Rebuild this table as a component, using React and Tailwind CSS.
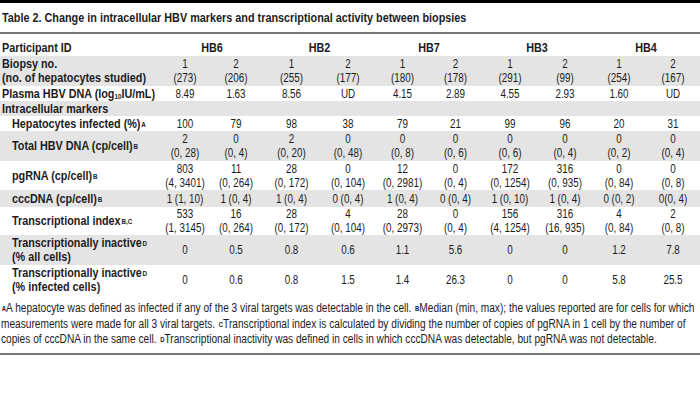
import React from "react";

const cols = "grid grid-cols-[161px_48px_54px_57px_56px_53px_53px_56px_54px_54px_54px]";

const Sup = ({ children }) => (
  <sup className="text-[7px] font-bold relative -top-[1px] ml-[1px]">{children}</sup>
);

const rows = [
  {
    label: ["Biopsy no.", "(no. of hepatocytes studied)"],
    gray: true,
    h: "h-[30px]",
    cells: [
      ["1", "(273)"], ["2", "(206)"], ["1", "(255)"], ["2", "(177)"], ["1", "(180)"],
      ["2", "(178)"], ["1", "(291)"], ["2", "(99)"], ["1", "(254)"], ["2", "(167)"],
    ],
  },
  {
    label: [
      <>
        Plasma HBV DNA (log<sub className="text-[7px]">10</sub>IU/mL)
      </>,
    ],
    h: "h-[15px]",
    cells: ["8.49", "1.63", "8.56", "UD", "4.15", "2.89", "4.55", "2.93", "1.60", "UD"],
  },
  { label: ["Intracellular markers"], gray: true, h: "h-[15px]", cells: [] },
  {
    label: [<>Hepatocytes infected (%)<Sup>A</Sup></>],
    indent: true,
    h: "h-[15px]",
    cells: ["100", "79", "98", "38", "79", "21", "99", "96", "20", "31"],
  },
  {
    label: [<>Total HBV DNA (cp/cell)<Sup>B</Sup></>],
    indent: true,
    gray: true,
    h: "h-[30px]",
    cells: [
      ["2", "(0, 28)"], ["0", "(0, 4)"], ["2", "(0, 20)"], ["0", "(0, 48)"], ["0", "(0, 8)"],
      ["0", "(0, 6)"], ["0", "(0, 6)"], ["0", "(0, 4)"], ["0", "(0, 2)"], ["0", "(0, 4)"],
    ],
  },
  {
    label: [<>pgRNA (cp/cell)<Sup>B</Sup></>],
    indent: true,
    h: "h-[29px]",
    cells: [
      ["803", "(4, 3401)"], ["11", "(0, 264)"], ["28", "(0, 172)"], ["0", "(0, 104)"],
      ["12", "(0, 2981)"], ["0", "(0, 4)"], ["172", "(0, 1254)"], ["316", "(0, 935)"],
      ["0", "(0, 84)"], ["0", "(0, 8)"],
    ],
  },
  {
    label: [<>cccDNA (cp/cell)<Sup>B</Sup></>],
    indent: true,
    gray: true,
    h: "h-[17px]",
    cells: [
      "1 (1, 10)", "1 (0, 4)", "1 (0, 4)", "0 (0, 4)", "1 (0, 4)",
      "0 (0, 4)", "1 (0, 10)", "1 (0, 4)", "0 (0, 2)", "0(0, 4)",
    ],
  },
  {
    label: [<>Transcriptional index<Sup>B,C</Sup></>],
    indent: true,
    h: "h-[28px]",
    cells: [
      ["533", "(1, 3145)"], ["16", "(0, 264)"], ["28", "(0, 172)"], ["4", "(0, 104)"],
      ["28", "(0, 2973)"], ["0", "(0, 4)"], ["156", "(4, 1254)"], ["316", "(16, 935)"],
      ["4", "(0, 84)"], ["2", "(0, 8)"],
    ],
  },
  {
    label: [<>Transcriptionally inactive<Sup>D</Sup></>, "(% all cells)"],
    indent: true,
    gray: true,
    h: "h-[30px]",
    cells: ["0", "0.5", "0.8", "0.6", "1.1", "5.6", "0", "0", "1.2", "7.8"],
  },
  {
    label: [<>Transcriptionally inactive<Sup>D</Sup></>, "(% infected cells)"],
    indent: true,
    h: "h-[30px]",
    cells: ["0", "0.6", "0.8", "1.5", "1.4", "26.3", "0", "0", "5.8", "25.5"],
  },
];

function Row({ row }) {
  return (
    <div className={`${cols} ${row.h} ${row.gray ? "bg-[#e4e4e4]" : ""} items-center`}>
      <div className={row.indent ? "pl-[12px]" : "pl-[2px]"}>
        <div className="font-bold leading-[14px] origin-left scale-x-[0.9]">
          {row.label.map((l, i) => (
            <div key={i} className="whitespace-nowrap">{l}</div>
          ))}
        </div>
      </div>
      {row.cells.map((c, i) => (
        <div key={i} className="text-center leading-[14px] whitespace-nowrap scale-x-[0.82]">
          {Array.isArray(c) ? c.map((t, j) => <div key={j}>{t}</div>) : c}
        </div>
      ))}
    </div>
  );
}

export default function App() {
  return (
    <div className="w-[700px] h-[406px] bg-white text-[#1c1c1c] text-[12px] font-['Liberation_Sans',Arial,sans-serif] overflow-hidden">
      <div className="h-[3px] bg-black" />
      <div className="h-[29px] flex items-center pl-[2px] pt-[1px]">
        <div className="text-[13px] font-bold whitespace-nowrap origin-left scale-x-[0.833]">
          Table 2. Change in intracellular HBV markers and transcriptional activity between biopsies
        </div>
      </div>
      <div className="h-[2px] bg-[#777]" />
      <div className={`${cols} h-[22px] pt-[7px] font-bold leading-[14px]`}>
        <div className="pl-[2px]">
          <div className="origin-left scale-x-[0.9]">Participant ID</div>
        </div>
        <div className="col-span-2 text-center scale-x-[0.9]">HB6</div>
        <div className="col-span-2 text-center scale-x-[0.9]">HB2</div>
        <div className="col-span-2 text-center scale-x-[0.9]">HB7</div>
        <div className="col-span-2 text-center scale-x-[0.9]">HB3</div>
        <div className="col-span-2 text-center scale-x-[0.9]">HB4</div>
      </div>
      {rows.map((r, i) => (
        <Row key={i} row={r} />
      ))}
      <div className="pt-[6px] pl-[1px] text-[12px] leading-[15.5px] whitespace-nowrap">
        <div className="origin-left scale-x-[0.845]">
          <Sup>A</Sup>A hepatocyte was defined as infected if any of the 3 viral targets was detectable in the cell. <Sup>B</Sup>Median (min, max); the values reported are for cells for which
        </div>
        <div className="origin-left scale-x-[0.845]">
          measurements were made for all 3 viral targets. <Sup>C</Sup>Transcriptional index is calculated by dividing the number of copies of pgRNA in 1 cell by the number of
        </div>
        <div className="origin-left scale-x-[0.845]">
          copies of cccDNA in the same cell. <Sup>D</Sup>Transcriptional inactivity was defined in cells in which cccDNA was detectable, but pgRNA was not detectable.
        </div>
      </div>
      <div className="mt-[5px] h-[2px] bg-[#777]" />
    </div>
  );
}
